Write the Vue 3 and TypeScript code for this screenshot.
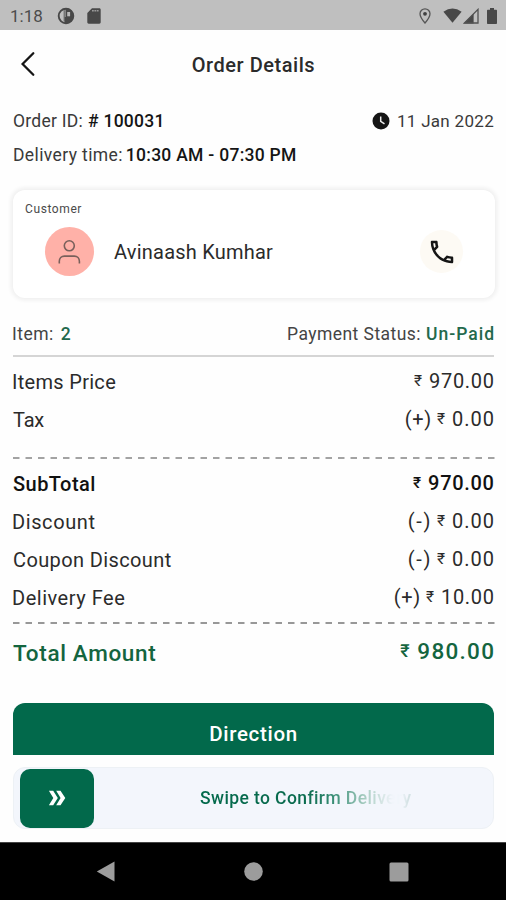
<script setup lang="ts">
interface PriceRow {
  id: string
  label: string
  sign?: string
  value: string
}

const itemRows: PriceRow[] = [
  { id: 'items-price', label: 'Items Price', value: '970.00' },
  { id: 'tax', label: 'Tax', sign: '(+)', value: '0.00' },
]

const totalRows: PriceRow[] = [
  { id: 'subtotal', label: 'SubTotal', value: '970.00' },
  { id: 'discount', label: 'Discount', sign: '(-)', value: '0.00' },
  { id: 'coupon', label: 'Coupon Discount', sign: '(-)', value: '0.00' },
  { id: 'fee', label: 'Delivery Fee', sign: '(+)', value: '10.00' },
]
</script>

<template>
  <div class="screen">
    <div class="status-bar">
      <span class="clock">1:18</span>
      <svg class="st-app" width="18" height="18" viewBox="0 0 18 18">
        <circle cx="9" cy="9" r="7.3" fill="none" stroke="#484848" stroke-width="1.9" />
        <path d="M8.5 1.500h2.500a7.500 7.500 0 0 1 5.500 8.500L8.500 10z" fill="#484848" />
        <path d="M7.700 10h8.500a7.500 7.500 0 0 1-8.500 6.400z" fill="#484848" />
        <path d="M10.200 5h2.900v4.300h-2.900z" fill="#b9b9b9" />
        <path d="M7.200 3.200v11.500" stroke="#484848" stroke-width=".9" />
      </svg>
      <svg class="st-sd" width="14" height="16" viewBox="0 0 14 16">
        <path d="M5 .3h7.300c.8 0 1.400.6 1.400 1.400v12.600c0 .8-.6 1.400-1.400 1.400H1.700c-.8 0-1.400-.6-1.400-1.400V5z" fill="#484848" />
        <path d="M5 2.800h7" stroke="#999" stroke-width="1.600" stroke-dasharray="1.800 .6" />
      </svg>
      <span class="spacer"></span>
      <svg class="st-pin" width="12" height="16" viewBox="0 0 12 16">
        <path d="M6 .8a5 5 0 0 0-5 5C1 9.300 6 15 6 15s5-5.700 5-9.200a5 5 0 0 0-5-5z" fill="none" stroke="#565656" stroke-width="1.300" />
        <circle cx="6" cy="5.800" r="1.900" fill="#404040" />
      </svg>
      <svg class="st-wifi" width="19" height="15" viewBox="0 0 19 15">
        <path d="M.4 3.800Q9.500-3 18.600 3.800L9.500 14.700z" fill="#484848" />
      </svg>
      <svg class="st-cell" width="16" height="16" viewBox="0 0 16 16">
        <path d="M.6 15.400h10V5.400z" fill="#484848" />
        <path d="M1.500 15H15V1.400z" fill="none" stroke="#515151" stroke-width="1.300" />
      </svg>
      <svg class="st-batt" width="10" height="16" viewBox="0 0 10 16">
        <path d="M3 0h4v1.700h2c.6 0 1 .4 1 1V15c0 .6-.4 1-1 1H1c-.6 0-1-.4-1-1V2.700c0-.6.4-1 1-1h2z" fill="#484848" />
      </svg>
    </div>

    <header class="app-bar">
      <svg class="back" width="16" height="26" viewBox="0 0 16 26">
        <path d="M13.300 2.200L2.600 13l10.700 10.800" fill="none" stroke="#151515" stroke-width="2.300" stroke-linecap="round" />
      </svg>
      <h1>Order Details</h1>
    </header>

    <main class="content">
      <div class="info-row order-row">
        <div><span class="order-label">Order ID:</span><b class="order-id"># 100031</b></div>
        <div class="date">
          <svg width="18" height="18" viewBox="0 0 18 18">
            <circle cx="9" cy="9" r="8.500" fill="#151515" />
            <path d="M8.700 4.500V9.400l3.800 2.500" fill="none" stroke="#eee" stroke-width="1.500" />
          </svg>
          <span class="date-text">11 Jan 2022</span>
        </div>
      </div>
      <div class="info-row time-row">
        <div><span class="time-label">Delivery time:</span><b class="time-range">10:30 AM - 07:30 PM</b></div>
      </div>

      <section class="customer">
        <div class="customer-title">Customer</div>
        <div class="customer-body">
          <div class="avatar">
            <svg width="23" height="26" viewBox="0 0 23 26">
              <circle cx="11.300" cy="6.800" r="5" />
              <path d="M1.300 24.500v-2.300c0-3 2.100-5.100 5.100-5.100h9.900c3 0 5.100 2.100 5.100 5.100v2.300" />
            </svg>
          </div>
          <span class="customer-name">Avinaash Kumhar</span>
          <button class="call" aria-label="Call">
            <svg width="30" height="30" viewBox="0 0 24 24">
              <path d="M6.540 5c.06.890.21 1.760.45 2.590l-1.200 1.200c-.41-1.200-.67-2.470-.76-3.790h1.510m9.860 12.020c.85.240 1.720.39 2.600.45v1.490c-1.320-.09-2.590-.35-3.800-.75l1.200-1.190M7.500 3H4c-.55 0-1 .45-1 1 0 9.390 7.610 17 17 17 .55 0 1-.45 1-1v-3.490c0-.55-.45-1-1-1-1.240 0-2.450-.2-3.570-.57-.1-.04-.21-.05-.31-.05-.26 0-.51.1-.71.29l-2.200 2.200c-2.830-1.450-5.150-3.760-6.590-6.590l2.200-2.200c.28-.28.36-.67.25-1.020C8.700 6.450 8.500 5.250 8.500 4c0-.55-.45-1-1-1z" />
            </svg>
          </button>
        </div>
      </section>

      <div class="summary">
        <div><span class="item-label">Item:</span><b>2</b></div>
        <div><span class="pay-label">Payment Status:</span><b class="pay-value">Un-Paid</b></div>
      </div>

      <div class="rows first">
        <div v-for="row in itemRows" :key="row.id" class="row" :class="row.id">
          <span class="label">{{ row.label }}</span>
          <span class="amount"><span v-if="row.sign" class="sign">{{ row.sign }}</span><span class="rupee">₹</span><span class="value">{{ row.value }}</span></span>
        </div>
      </div>
      <svg class="dash" width="482" height="2"><path d="M0 1H482" /></svg>
      <div class="rows second">
        <div v-for="row in totalRows" :key="row.id" class="row" :class="row.id">
          <span class="label">{{ row.label }}</span>
          <span class="amount"><span v-if="row.sign" class="sign">{{ row.sign }}</span><span class="rupee">₹</span><span class="value">{{ row.value }}</span></span>
        </div>
      </div>
      <svg class="dash dark" width="482" height="2"><path d="M0 1H482" /></svg>
      <div class="row total">
        <span class="label">Total Amount</span>
        <span class="amount"><span class="rupee">₹</span><span class="value">980.00</span></span>
      </div>
    </main>

    <footer class="actions">
      <button class="direction">Direction</button>
      <div class="swipe">
        <div class="knob">
          <svg width="18" height="16" viewBox="0 0 18 16">
            <path d="M.9.700h4.300L9.800 8l-4.600 7.300H.9L5.300 8z" />
            <path d="M8.200.700h4.300L17.300 8l-4.800 7.300H8.200L12.600 8z" />
          </svg>
        </div>
        <div class="swipe-track"><span class="swipe-text">Swipe to Confirm Delivery</span></div>
      </div>
    </footer>

    <nav class="nav-bar">
      <svg width="20" height="22" viewBox="0 0 20 22"><path d="M18.500.500v20L.800 10.500z" /></svg>
      <svg width="20" height="20" viewBox="0 0 20 20"><circle cx="10.500" cy="9.500" r="9.300" /></svg>
      <svg width="20" height="20" viewBox="0 0 20 20"><rect x=".5" y=".5" width="19" height="19" rx="1.500" /></svg>
    </nav>
  </div>
</template>

<style>
body {
  margin: 0;
  background: #fff;
}
</style>

<style scoped>
.screen {
  width: 506px;
  height: 900px;
  display: flex;
  flex-direction: column;
  overflow: hidden;
  background: #fefefe;
  color: #2b2b2b;
  font-family: Roboto, "Liberation Sans", sans-serif;
  font-size: 17.5px;
}

svg {
  display: block;
  flex: none;
}

button {
  border: 0;
  padding: 0;
  font: inherit;
}

b {
  font-weight: 500;
}

.status-bar {
  height: 30px;
  flex: none;
  box-sizing: border-box;
  display: flex;
  align-items: center;
  padding: 1px 9px 0 10px;
  background: #bfbfbf;
}

.clock {
  width: 47px;
  color: #4c4c4c;
  font-size: 17px;
}

.spacer {
  flex: 1;
}

.st-sd,
.st-wifi {
  margin-left: 12px;
}

.st-cell {
  margin-left: 1px;
}

.st-batt {
  margin-left: 8px;
}

.app-bar {
  height: 68px;
  flex: none;
  display: grid;
  grid-template-columns: 60px 1fr 60px;
  align-items: center;
}

.back {
  margin-left: 20px;
}

h1 {
  margin: 0;
  padding: 1px 0 0 1px;
  text-align: center;
  font-size: 20px;
  font-weight: 500;
  line-height: 24px;
  letter-spacing: 0.54px;
}

.content {
  padding: 6px 12px 0 13px;
}

.info-row {
  height: 34px;
  display: flex;
  justify-content: space-between;
  align-items: center;
  white-space: nowrap;
  color: #3a3a3a;
}

.info-row b {
  color: #151515;
}

.order-label {
  letter-spacing: 0.26px;
}

.order-id {
  margin-left: 5px;
  letter-spacing: 0.25px;
}

.date {
  display: flex;
  align-items: center;
  gap: 7px;
}

.date-text {
  font-size: 17px;
  letter-spacing: 0.3px;
}

.time-label {
  letter-spacing: 0.38px;
}

.time-range {
  margin-left: 3px;
  letter-spacing: 0.28px;
}

.customer {
  height: 108px;
  margin: 18px -1px 0 0;
  box-sizing: border-box;
  padding: 11px 32px 0 12px;
  border-radius: 12px;
  background: #fff;
  box-shadow: 0 0 4px 2px #eee;
}

.customer-title {
  height: 16px;
  font-size: 12px;
  line-height: 16px;
  letter-spacing: 0.6px;
  color: #4a4a4a;
}

.customer-body {
  display: flex;
  align-items: center;
  margin-top: 10px;
}

.avatar {
  width: 49px;
  height: 49px;
  margin-left: 20px;
  border-radius: 50%;
  display: grid;
  place-items: center;
  background: #ffb1a8;
}

.avatar svg {
  fill: none;
  stroke: #79605b;
  stroke-width: 1.600;
}

.customer-name {
  flex: 1;
  margin-left: 20px;
  padding-top: 1px;
  font-size: 20px;
  letter-spacing: 0.22px;
}

.call {
  width: 43px;
  height: 43px;
  border-radius: 50%;
  display: grid;
  place-items: center;
  background: #fdfaf4;
}

.call svg {
  fill: #151515;
}

.summary {
  height: 46px;
  margin-top: 13px;
  box-sizing: border-box;
  padding-top: 1px;
  border-bottom: 2px solid #d5d5d5;
  display: flex;
  justify-content: space-between;
  align-items: center;
  white-space: nowrap;
  color: #444;
}

.summary b {
  color: #23694c;
}

.item-label {
  margin-left: -1px;
  margin-right: 7px;
  letter-spacing: 0.5px;
}

.pay-label {
  margin-right: 5px;
  letter-spacing: 0.45px;
}

.pay-value {
  margin-right: -1px;
  letter-spacing: 1px;
}

.rows.first {
  padding: 5px 0 19px;
}

.rows.second {
  padding: 5px 0 6px;
}

.row {
  height: 38px;
  display: flex;
  justify-content: space-between;
  align-items: center;
  white-space: nowrap;
  font-size: 20px;
  line-height: 24px;
}

.label {
  margin-top: 2px;
}

.amount {
  display: flex;
  align-items: center;
}

.rupee {
  width: 15px;
  font-size: 15.500px;
}

.sign {
  margin-right: 5px;
  letter-spacing: 0.700px;
}

.discount .sign,
.coupon .sign {
  letter-spacing: 1.600px;
}

.value {
  letter-spacing: 0.700px;
  margin-right: -0.700px;
}

.tax .value,
.discount .value,
.coupon .value {
  letter-spacing: 1px;
  margin-right: -1px;
}

.items-price .label {
  margin-left: -1px;
  letter-spacing: 0.3px;
}

.tax .label {
  letter-spacing: -0.2px;
}

.subtotal {
  font-weight: 500;
  color: #111;
}

.subtotal .label {
  letter-spacing: 0.45px;
}

.discount .label {
  margin-left: -1px;
  letter-spacing: 0.6px;
}

.coupon .label {
  letter-spacing: 0.38px;
}

.fee .label {
  margin-left: -1px;
  letter-spacing: 0.52px;
}

.dash {
  stroke: #a3a3a3;
  stroke-width: 1.800;
  stroke-dasharray: 6.500 6;
}

.dash.dark {
  stroke: #777;
  stroke-width: 1.400;
}

.total {
  height: 54px;
  font-size: 22.500px;
  font-weight: 500;
  color: #14653f;
}

.total .label {
  margin-top: 3px;
  letter-spacing: 0.65px;
}

.total .rupee {
  width: 17px;
  font-size: 18px;
}

.total .value {
  letter-spacing: 1.300px;
  margin-right: -1.300px;
}

.actions {
  margin-top: auto;
  padding: 0 12px 13px 13px;
}

.direction {
  display: block;
  width: 100%;
  height: 52px;
  padding-top: 10px;
  border-radius: 12px 12px 0 0;
  background: #02694b;
  color: #fff;
  font-size: 20.500px;
  font-weight: 500;
  letter-spacing: 0.700px;
}

.swipe {
  height: 62px;
  margin-top: 12px;
  box-sizing: border-box;
  padding: 1px 7px;
  border: 1px solid #edf1f5;
  border-radius: 12px;
  display: flex;
  align-items: center;
  background: #f3f6fc;
}

.knob {
  width: 74px;
  height: 59px;
  margin-left: -1px;
  border-radius: 10px;
  display: grid;
  place-items: center;
  flex: none;
  background: #02694b;
}

.knob svg {
  fill: #fff;
}

.swipe-track {
  flex: 1;
  padding-left: 106px;
  white-space: nowrap;
}

.swipe-text {
  font-weight: 500;
  letter-spacing: 0.4px;
  color: transparent;
  background: linear-gradient(90deg, #02694b 0%, #0a6b4e 50%, #3c9078 64%, #a3cabe 77%, #dbe8e8 87%, #f1f5fb 91%, #f1f5fb 95%, #d4e2e4 98%);
  background-clip: text;
  -webkit-background-clip: text;
}

.nav-bar {
  height: 58px;
  flex: none;
  display: flex;
  justify-content: space-between;
  align-items: center;
  box-sizing: border-box;
  padding: 0 97px 0 96px;
  border-top: 1px solid #444;
  background: #000;
}

.nav-bar svg {
  fill: #9c9c9c;
}
</style>
